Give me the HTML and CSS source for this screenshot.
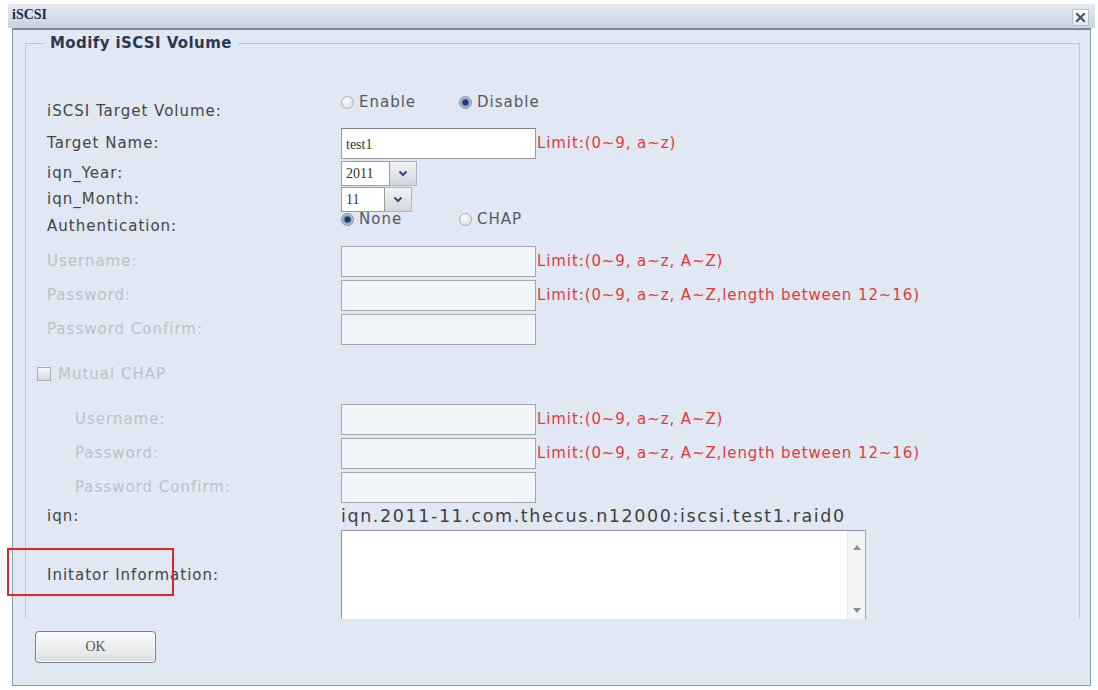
FILE: index.html
```html
<!DOCTYPE html>
<html lang="en">
<head>
    <meta charset="UTF-8">
    <meta name="viewport" content="width=device-width, initial-scale=1.0">
    <title>iSCSI</title>
    <link rel="stylesheet" href="styles.css">
</head>
<body>
    <div class="window">
        <div class="titlebar">
            <span class="title">iSCSI</span>
            <span class="close">
                <svg width="11" height="11" viewBox="0 0 11 11"><path d="M2 2 L9 9 M9 2 L2 9" stroke="#3d5573" stroke-width="2.2" stroke-linecap="square"/></svg>
            </span>
        </div>

        <div class="body">
            <div class="scroll">
                <fieldset class="group">
                    <legend>Modify iSCSI Volume</legend>

                    <div class="row row-vol">
                        <label>iSCSI Target Volume:</label>
                        <div class="choices">
                            <span class="radio"><i></i>Enable</span>
                            <span class="radio on"><i></i>Disable</span>
                        </div>
                    </div>

                    <div class="row row-name">
                        <label>Target Name:</label>
                        <div class="field">
                            <span class="input">test1</span>
                            <span class="limit">Limit:(0~9, a~z)</span>
                        </div>
                    </div>

                    <div class="row row-sel">
                        <label>iqn_Year:</label>
                        <div class="field">
                            <span class="select year"><span class="value">2011</span><span class="arrow"><svg width="10" height="7" viewBox="0 0 10 7"><path d="M1.5 1.5 L5 5 L8.5 1.5" fill="none" stroke="#2c4a78" stroke-width="2"/></svg></span></span>
                        </div>
                    </div>

                    <div class="row row-sel">
                        <label>iqn_Month:</label>
                        <div class="field">
                            <span class="select month"><span class="value">11</span><span class="arrow"><svg width="10" height="7" viewBox="0 0 10 7"><path d="M1.5 1.5 L5 5 L8.5 1.5" fill="none" stroke="#2c4a78" stroke-width="2"/></svg></span></span>
                        </div>
                    </div>

                    <div class="row row-auth">
                        <label>Authentication:</label>
                        <div class="choices">
                            <span class="radio on"><i></i>None</span>
                            <span class="radio"><i></i>CHAP</span>
                        </div>
                    </div>

                    <div class="row row-box off">
                        <label>Username:</label>
                        <div class="field">
                            <span class="input"></span>
                            <span class="limit">Limit:(0~9, a~z, A~Z)</span>
                        </div>
                    </div>
                    <div class="row row-box off">
                        <label>Password:</label>
                        <div class="field">
                            <span class="input"></span>
                            <span class="limit">Limit:(0~9, a~z, A~Z,length between 12~16)</span>
                        </div>
                    </div>
                    <div class="row row-box off">
                        <label>Password Confirm:</label>
                        <div class="field">
                            <span class="input"></span>
                        </div>
                    </div>

                    <div class="row row-mutual off">
                        <label class="check"><i></i>Mutual CHAP</label>
                    </div>

                    <div class="row row-box off sub">
                        <label>Username:</label>
                        <div class="field">
                            <span class="input"></span>
                            <span class="limit">Limit:(0~9, a~z, A~Z)</span>
                        </div>
                    </div>
                    <div class="row row-box off sub">
                        <label>Password:</label>
                        <div class="field">
                            <span class="input"></span>
                            <span class="limit">Limit:(0~9, a~z, A~Z,length between 12~16)</span>
                        </div>
                    </div>
                    <div class="row row-box off sub">
                        <label>Password Confirm:</label>
                        <div class="field">
                            <span class="input"></span>
                        </div>
                    </div>

                    <div class="row row-iqn">
                        <label>iqn:</label>
                        <div class="iqn">iqn.2011-11.com.thecus.n12000:iscsi.test1.raid0</div>
                    </div>

                    <div class="row row-info">
                        <label>Initator Information:</label>
                        <div class="textarea">
                            <span class="scrollbar">
                                <svg width="8" height="5" viewBox="0 0 8 5"><path d="M0 5 L4 0 L8 5 Z" fill="#8a8f96"/></svg>
                                <svg width="8" height="5" viewBox="0 0 8 5"><path d="M0 0 L4 5 L8 0 Z" fill="#8a8f96"/></svg>
                            </span>
                        </div>
                    </div>
                </fieldset>
            </div>

            <div class="footer">
                <button class="ok">OK</button>
            </div>
        </div>

        <!-- highlight frame around the initiator label -->
        <div class="mark"></div>
    </div>
</body>
</html>
```

FILE: styles.css
```css
body {
    margin: 0;
    background: #ffffff;
    font-family: "DejaVu Sans", Verdana, sans-serif;
    font-size: 15px;
    letter-spacing: 1px;
    color: #454545;
}
.window {
    position: relative;
    margin: 4px 3px 0 8px;
    height: 682px;
    display: flex;
    flex-direction: column;
}
.titlebar {
    height: 22px;
    display: flex;
    align-items: center;
    justify-content: space-between;
    padding: 0 6px 2px 4px;
    background: linear-gradient(#e6ebf1, #c8d2dd);
}
.title {
    font-family: "Liberation Serif", serif;
    font-weight: bold;
    font-size: 14px;
    letter-spacing: 0;
    color: #1e2c44;
}
.close {
    width: 15px;
    height: 15px;
    display: flex;
    align-items: center;
    justify-content: center;
    background: linear-gradient(#ffffff, #dfe6ee);
    border: 1px solid #b4c0ce;
    margin-top: 4px;
}
.body {
    flex: 1;
    margin: 0 4px;
    background: #e0e8f3;
    border: 1px solid #8e99a7;
    border-top: 2px solid #7d8897;
    display: flex;
    flex-direction: column;
}
.scroll {
    height: 589px;
    overflow: hidden;
}
.group {
    margin: 4px 10px 0 12px;
    padding: 32px 0 0 21px;
    border: 1px solid #b9c7d8;
    border-bottom: none;
}
.group legend {
    font-weight: bold;
    font-size: 15px;
    letter-spacing: 0.4px;
    color: #2b3950;
    padding: 0 6px;
    margin-left: -3px;
}
.row {
    display: grid;
    grid-template-columns: 294px 1fr;
    align-items: center;
}
.row label {
    white-space: nowrap;
}
.row-vol { height: 42px; }
.row-name { height: 34px; }
.row-sel { height: 26px; }
.row-auth { height: 32px; }
.row-box { height: 34px; }
.row-mutual { height: 56px; }
.row-iqn { height: 24px; }
.row-info { height: 92px; }
.off label {
    color: #bcc2ca;
}
.sub label {
    padding-left: 28px;
}
.row-vol label { padding-top: 12px; }
.row-vol .choices { margin-top: -6px; }
.row-auth label { padding-bottom: 4px; }
.row-auth .choices { margin-top: -18px; }
.choices {
    display: flex;
}
.radio {
    width: 118px;
    display: flex;
    align-items: center;
    gap: 5px;
    color: #555a62;
}
.radio i {
    width: 13px;
    height: 13px;
    border-radius: 50%;
    border: 1px solid #a9aeb5;
    background: radial-gradient(circle at 40% 35%, #ffffff, #d2d7de);
    box-sizing: border-box;
}
.radio.on i {
    border-color: #7f8a99;
    background: radial-gradient(circle, #1f3f66 0 2.5px, #6f96c0 3.5px, #d8e2ec 6px);
}
.check {
    display: flex;
    align-items: center;
    gap: 7px;
    margin-left: -10px;
}
.check i {
    width: 14px;
    height: 14px;
    box-sizing: border-box;
    border: 1px solid #a9aeb6;
    background: linear-gradient(#f6f7f9, #d5d9de);
}
.field {
    display: flex;
    align-items: center;
}
.input {
    width: 195px;
    height: 31px;
    box-sizing: border-box;
    background: #ffffff;
    border: 1px solid #9c9c9c;
    border-top-color: #7e7e7e;
    font-family: "Liberation Serif", serif;
    font-size: 14px;
    letter-spacing: 0;
    color: #333;
    padding: 8px 0 0 4px;
}
.off .input {
    background: #f1f5fa;
    border-color: #a4a8ad;
}
.limit {
    color: #e5393c;
    margin-left: 1px;
    white-space: nowrap;
    letter-spacing: 0.9px;
}
.select {
    display: flex;
    height: 25px;
    box-sizing: border-box;
}
.select .value {
    background: #ffffff;
    border: 1px solid #9c9c9c;
    font-family: "Liberation Serif", serif;
    font-size: 14px;
    letter-spacing: 0;
    color: #333;
    padding: 4px 0 0 4px;
    box-sizing: border-box;
}
.select.year .value { width: 49px; }
.select.month .value { width: 44px; }
.select .arrow {
    width: 26px;
    display: flex;
    align-items: center;
    justify-content: center;
    background: linear-gradient(#f2f4f6, #d3d7dc);
    border: 1px solid #b0b4ba;
    border-left: none;
}
.iqn {
    font-size: 17.5px;
    letter-spacing: 1.6px;
    color: #404040;
    white-space: nowrap;
}
.row-info {
    align-items: start;
    padding-top: 2px;
}
.row-info label {
    margin-top: 36px;
}
.textarea {
    width: 525px;
    height: 92px;
    box-sizing: border-box;
    background: #ffffff;
    border: 1px solid #8f939a;
    border-right-color: #a2a6ac;
    display: flex;
    justify-content: flex-end;
}
.scrollbar {
    width: 17px;
    display: flex;
    flex-direction: column;
    justify-content: space-between;
    align-items: center;
    padding: 14px 0 8px;
    background: #f2f3f5;
    border-left: 1px solid #e6e7ea;
}
.footer {
    padding: 12px 0 0 22px;
}
.ok {
    width: 121px;
    height: 32px;
    border: 1px solid #6f7b8b;
    border-radius: 4px;
    background: linear-gradient(#fbfbfb, #dcdfe3);
    font-family: "Liberation Serif", serif;
    font-size: 14px;
    color: #555;
    box-shadow: inset 0 0 0 1px #ffffff;
}
.mark {
    position: absolute;
    left: -1px;
    top: 544px;
    width: 163px;
    height: 44px;
    border: 2px solid #e0262d;
}
```
